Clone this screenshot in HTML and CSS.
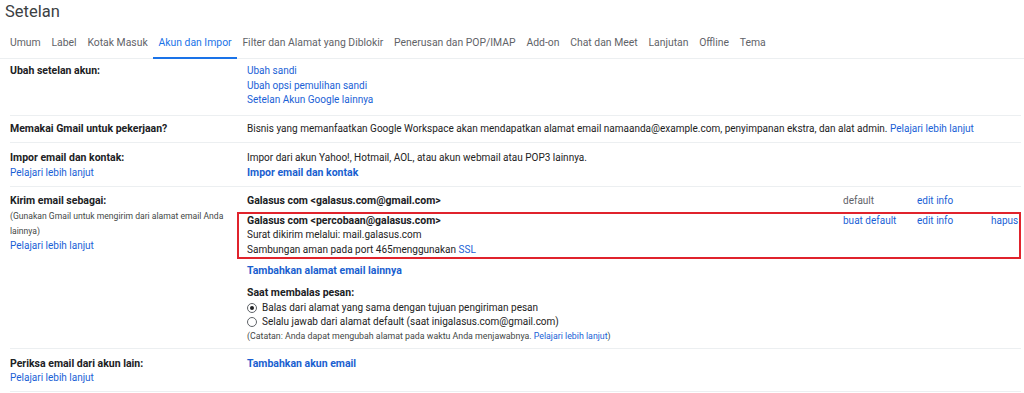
FILE: index.html
```html
<!DOCTYPE html>
<html lang="id">
<head>
<meta charset="utf-8">
<title>Setelan</title>
<link rel="stylesheet" href="styles.css">
</head>
<body>
<h1 class="title">Setelan</h1>
<nav class="tabs">
  <span class="tab">Umum</span>
  <span class="tab">Label</span>
  <span class="tab">Kotak Masuk</span>
  <span class="tab active">Akun dan Impor</span>
  <span class="tab">Filter dan Alamat yang Diblokir</span>
  <span class="tab">Penerusan dan POP/IMAP</span>
  <span class="tab">Add-on</span>
  <span class="tab">Chat dan Meet</span>
  <span class="tab">Lanjutan</span>
  <span class="tab">Offline</span>
  <span class="tab">Tema</span>
</nav>
<div class="settings">
  <div class="row r1">
    <div class="label"><b>Ubah setelan akun:</b></div>
    <div class="content">
      <a class="link">Ubah sandi</a>
      <a class="link">Ubah opsi pemulihan sandi</a>
      <a class="link">Setelan Akun Google lainnya</a>
    </div>
  </div>
  <div class="row r2">
    <div class="label"><b>Memakai Gmail untuk pekerjaan?</b></div>
    <div class="content"><div>Bisnis yang memanfaatkan Google Workspace akan mendapatkan alamat email namaanda@example.com, penyimpanan ekstra, dan alat admin. <a class="inl">Pelajari lebih lanjut</a></div></div>
  </div>
  <div class="row r3">
    <div class="label"><b>Impor email dan kontak:</b><a class="link">Pelajari lebih lanjut</a></div>
    <div class="content">
      <div>Impor dari akun Yahoo!, Hotmail, AOL, atau akun webmail atau POP3 lainnya.</div>
      <a class="link strong">Impor email dan kontak</a>
    </div>
  </div>
  <div class="row r4">
    <div class="label">
      <b>Kirim email sebagai:</b>
      <div class="small">(Gunakan Gmail untuk mengirim dari alamat email Anda lainnya)</div>
      <a class="link">Pelajari lebih lanjut</a>
    </div>
    <div class="content">
      <div class="acct">
        <div class="addr"><b>Galasus com &lt;galasus.com@gmail.com&gt;</b></div>
        <div class="c1 muted">default</div>
        <div class="c2"><a class="inl">edit info</a></div>
        <div class="c3"></div>
      </div>
      <div class="acct boxed">
        <div class="addr">
          <b>Galasus com &lt;percobaan@galasus.com&gt;</b>
          <div>Surat dikirim melalui: mail.galasus.com</div>
          <div>Sambungan aman pada port 465menggunakan <a class="inl">SSL</a></div>
        </div>
        <div class="c1"><a class="inl">buat default</a></div>
        <div class="c2"><a class="inl">edit info</a></div>
        <div class="c3"><a class="inl">hapus</a></div>
      </div>
      <a class="link strong add">Tambahkan alamat email lainnya</a>
      <div class="reply">
        <b>Saat membalas pesan:</b>
        <label class="radio"><span class="dot on"></span>Balas dari alamat yang sama dengan tujuan pengiriman pesan</label>
        <label class="radio"><span class="dot"></span>Selalu jawab dari alamat default (saat inigalasus.com@gmail.com)</label>
        <div class="note">(Catatan: Anda dapat mengubah alamat pada waktu Anda menjawabnya. <a class="inl">Pelajari lebih lanjut</a>)</div>
      </div>
    </div>
  </div>
  <div class="row r5">
    <div class="label"><b>Periksa email dari akun lain:</b><a class="link">Pelajari lebih lanjut</a></div>
    <div class="content"><a class="link strong">Tambahkan akun email</a></div>
  </div>
</div>
</body>
</html>
```
FILE: styles.css
```css
html, body {
  margin: 0;
  padding: 0;
  background: #ffffff;
}
body {
  font-family: Roboto, "Liberation Sans", Arial, sans-serif;
  font-size: 10px;
  line-height: 14.5px;
  color: #222222;
}
.title {
  margin: 0;
  padding: 1px 0 0 5px;
  font-size: 16.5px;
  line-height: 22px;
  font-weight: 400;
  color: #3c4043;
}
.tabs {
  display: flex;
  margin-top: 9px;
  padding-left: 4.6px;
  border-bottom: 1px solid #eceff1;
  font-size: 10.4px;
  color: #5f6368;
}
.tab {
  padding: 4px 5.4px 7px 5.4px;
  border-bottom: 2px solid transparent;
  margin-bottom: -1px;
  line-height: 14px;
}
.tab.active {
  color: #1a73e8;
  border-bottom-color: #1a73e8;
}
.settings {
  padding: 0 3px 0 10px;
}
.row {
  display: grid;
  grid-template-columns: 237px 1fr;
  border-bottom: 1px solid #eceff1;
}
.r1 { padding: 5px 0 7px; }
.r2 { padding: 6px 0 6px; }
.r3 { padding: 8px 0 6px; }
.r4 { padding: 7px 0 5px; }
.r5 { padding: 8px 0 5px; }
b {
  font-size: 10.5px;
  font-weight: 700;
  color: #202124;
}
.label {
  display: flex;
  flex-direction: column;
}
.content {
  display: flex;
  flex-direction: column;
  color: #222222;
}
.link, .inl {
  color: #1a5fd6;
  text-decoration: none;
  cursor: pointer;
}
.link {
  display: block;
  align-self: flex-start;
}
.link.strong {
  font-size: 10.5px;
  font-weight: 700;
  color: #1a5fd0;
}
.small {
  font-size: 8.6px;
  line-height: 15px;
  color: #444746;
  padding-right: 5px;
}
.muted {
  color: #5f6368;
}
.acct {
  display: grid;
  grid-template-columns: 1fr 74px 74px 30px;
}
.acct.boxed {
  grid-template-columns: 1fr 74px 74px 28px;
  margin: 3px 0 0 -10px;
  padding: 0 0 0 8px;
  border: 2px solid #e0232c;
}
.add {
  margin-top: 5px;
}
.reply {
  margin-top: 7.5px;
  display: flex;
  flex-direction: column;
}
.radio {
  display: flex;
  align-items: center;
  gap: 5px;
  color: #222222;
}
.dot {
  box-sizing: border-box;
  width: 10px;
  height: 10px;
  border: 1px solid #5f6368;
  border-radius: 50%;
  position: relative;
}
.dot.on::after {
  content: "";
  position: absolute;
  left: 2px;
  top: 2px;
  width: 4px;
  height: 4px;
  border-radius: 50%;
  background: #202124;
}
.note {
  font-size: 8.8px;
  line-height: 13px;
  color: #444746;
}
```
